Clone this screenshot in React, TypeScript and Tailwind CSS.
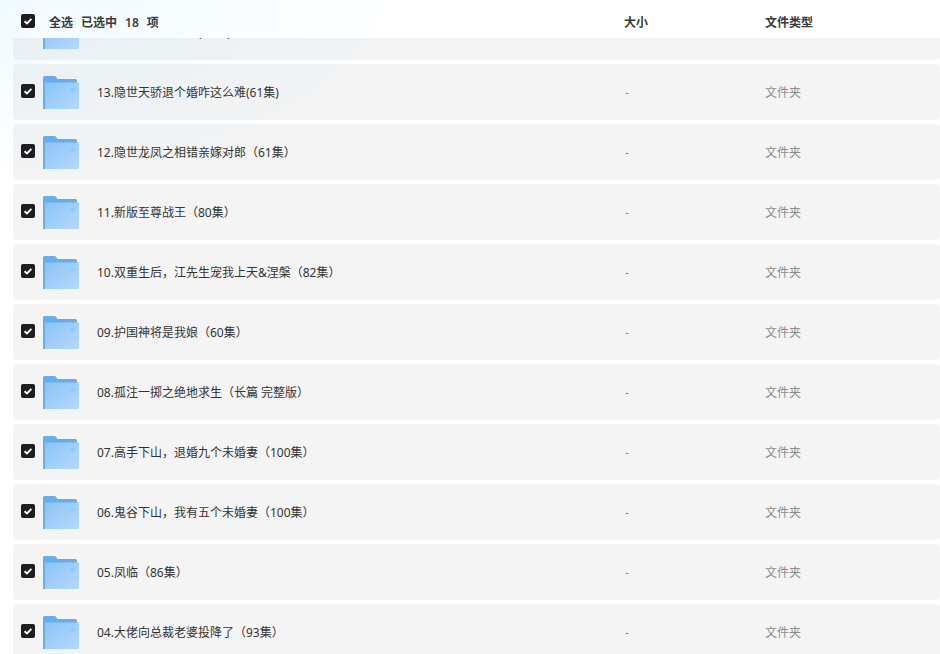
const rows = [
  "14.逆袭人生战神归(61集)",
  "13.隐世天骄退个婚咋这么难(61集)",
  "12.隐世龙凤之相错亲嫁对郎（61集）",
  "11.新版至尊战王（80集）",
  "10.双重生后，江先生宠我上天&涅槃（82集）",
  "09.护国神将是我娘（60集）",
  "08.孤注一掷之绝地求生（长篇 完整版）",
  "07.高手下山，退婚九个未婚妻（100集）",
  "06.鬼谷下山，我有五个未婚妻（100集）",
  "05.凤临（86集）",
  "04.大佬向总裁老婆投降了（93集）",
];

function Check() {
  return (
    <span className="flex h-[14px] w-[14px] shrink-0 items-center justify-center rounded-[2px] bg-[#1d1d22]">
      <svg width="10" height="10" viewBox="0 0 10 10" fill="none">
        <path d="M1.6 5.2 L4 7.4 L8.4 2.8" stroke="#fff" strokeWidth="1.9" />
      </svg>
    </span>
  );
}

function Folder() {
  return (
    <svg width="36" height="33" viewBox="0 0 36 33" className="block shrink-0">
      <defs>
        <linearGradient id="folderFront" x1="0" y1="0" x2="1" y2="1">
          <stop offset="0" stopColor="#8cc4f6" />
          <stop offset="1" stopColor="#b4d8fb" />
        </linearGradient>
      </defs>
      <path d="M0 1.5 A1.5 1.5 0 0 1 1.5 0 H11.5 Q12.5 0 13 1 L14.5 3 H32.5 A1.5 1.5 0 0 1 34 4.5 V8 H0 Z" fill="#63aeef" />
      <rect x="0" y="6" width="2" height="27" fill="#63aeef" />
      <path d="M2 6.5 H36 V31.5 A1.5 1.5 0 0 1 34.5 33 H2 Z" fill="url(#folderFront)" />
      <rect x="27" y="12" width="5" height="1" fill="#86c0f5" />
      <rect x="27" y="14" width="5" height="1" fill="#86c0f5" />
    </svg>
  );
}

export default function App() {
  return (
    <div className="flex h-[654px] w-[940px] flex-col overflow-hidden bg-[radial-gradient(ellipse_420px_190px_at_0_0,#f1fbff,#ffffff)] font-['Noto_Sans','Noto_Sans_CJK_SC',sans-serif] text-[12px]">
      <div className="flex h-[38px] shrink-0 items-center pl-[21px] font-semibold text-[#3a3a3a]">
        <span className="mt-[4px]"><Check /></span>
        <span className="ml-[14px] mt-[7px] flex items-center">
          <span className="w-[32px]">全选</span>
          <span className="flex w-[543px] gap-[8px]">
            <span>已选中</span>
            <span>18</span>
            <span>项</span>
          </span>
          <span className="w-[141px]">大小</span>
          <span>文件类型</span>
        </span>
      </div>
      <div className="min-h-0 flex-1 overflow-hidden">
        <div className="-mt-[34px] flex flex-col gap-[4px] pl-[13px]">
          {rows.map((name) => (
            <div key={name} className="flex h-[56px] shrink-0 items-center rounded-[4px] bg-black/[0.042] pl-[8px]">
              <span className="-mt-[2px]"><Check /></span>
              <span className="ml-[8px]"><Folder /></span>
              <span className="ml-[18px] w-[528px] pt-[1px] text-[#333]">{name}</span>
              <span className="w-[140px] pt-[1px] text-[#888]">-</span>
              <span className="pt-[1px] text-[#8c8c8c]">文件夹</span>
            </div>
          ))}
        </div>
      </div>
    </div>
  );
}
